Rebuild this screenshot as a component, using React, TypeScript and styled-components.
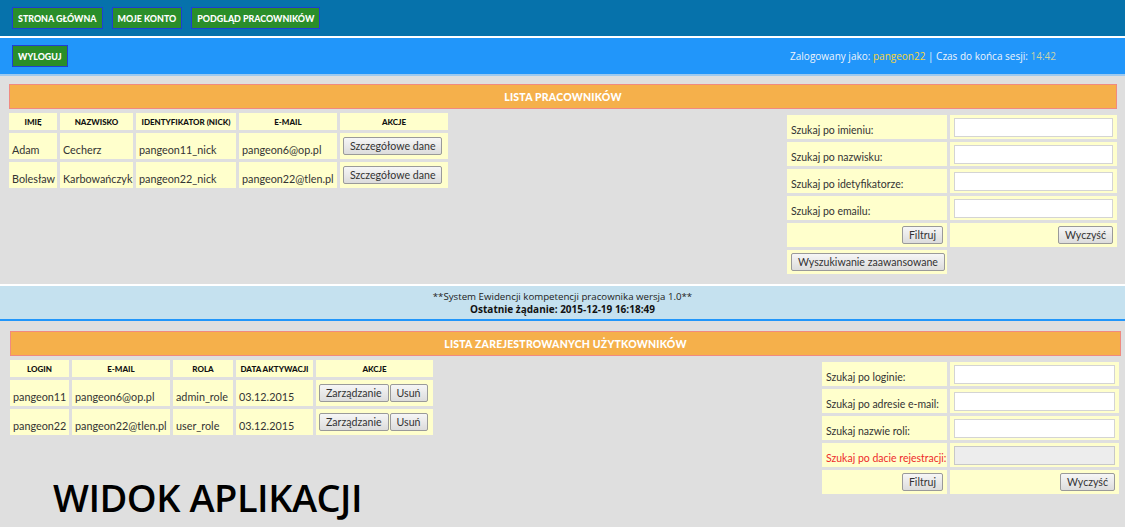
import React from "react";
import styled, { createGlobalStyle } from "styled-components";

const Global = createGlobalStyle`
  html, body { margin: 0; padding: 0; background: #dfdfdf; }
  body { font-family: "Lato", "Noto Sans", sans-serif; font-size: 11px; color: #333; }
  * { box-sizing: border-box; }
`;

const TopNav = styled.nav`
  height: 36px;
  background: #0672ab;
  display: flex;
  align-items: center;
  gap: 9px;
  padding: 0 12px;
  border-bottom: 2px solid #ffffff;
  box-sizing: content-box;
`;

const NavButton = styled.button`
  height: 22px;
  padding: 0 5px;
  background: #2a8e2a;
  border: 1px solid #1f3fd6;
  color: #fff;
  font-family: "Lato", sans-serif;
  font-weight: 900;
  font-size: 8.9px;
  letter-spacing: 0;
  text-transform: uppercase;
  cursor: pointer;
`;

const UserBar = styled.div`
  height: 36px;
  background: #2196fa;
  display: flex;
  align-items: center;
  justify-content: space-between;
  padding: 0 69px 0 12px;
  border-bottom: 2px solid #9ec9ee;
  box-sizing: content-box;
`;

const Session = styled.div`
  color: #eef4fb;
  font-family: "Open Sans", sans-serif;
  font-size: 10px;
  white-space: nowrap;
`;

const Hl = styled.span<{ $c: string }>`
  color: ${(p) => p.$c};
`;

const Section = styled.section<{ $l: number; $r: number; $t: number; $h: number }>`
  padding: ${(p) => p.$t}px ${(p) => p.$r}px 0 ${(p) => p.$l}px;
  height: ${(p) => p.$h}px;
  display: flex;
  flex-direction: column;
`;

const TitleBar = styled.div`
  flex: 0 0 25px;
  height: 25px;
  background: #f5b04b;
  border: 1px solid #f08a80;
  display: flex;
  align-items: center;
  justify-content: center;
  color: #fff;
  font-family: "Lato", sans-serif;
  font-weight: 900;
  font-size: 10.5px;
  letter-spacing: 0.2px;
  text-transform: uppercase;
`;

const ContentRow = styled.div`
  display: flex;
  justify-content: space-between;
  align-items: flex-start;
`;

const LeftCol = styled.div`
  display: flex;
  flex-direction: column;
`;

const DataTable = styled.table<{ $w: number }>`
  width: ${(p) => p.$w}px;
  border-collapse: separate;
  border-spacing: 3px;
  table-layout: fixed;
  margin: 1px 0 0 -3px;
`;

const Th = styled.th`
  height: 17px;
  padding: 0;
  background: #ffffcc;
  color: #111;
  font-family: "Lato", sans-serif;
  font-weight: 900;
  font-size: 8px;
  text-transform: uppercase;
  text-align: center;
  white-space: nowrap;
  overflow: hidden;
`;

const Td = styled.td<{ $h: number }>`
  height: ${(p) => p.$h}px;
  padding: 6px 3px 0 3px;
  background: #ffffcc;
  color: #333;
  font-size: 10.8px;
  white-space: nowrap;
  vertical-align: middle;
  overflow: hidden;
`;

const ActionTd = styled.td`
  padding: 0 3px;
  background: #ffffcc;
  white-space: nowrap;
  vertical-align: middle;
`;

const GreyButton = styled.button`
  height: 18px;
  padding: 0 6px;
  background: linear-gradient(#f6f6f6, #dcdcdc);
  border: 1px solid #9a9a9a;
  border-radius: 2px;
  color: #333;
  font-family: "Lato", sans-serif;
  font-size: 10.6px;
  line-height: 16px;
  cursor: pointer;
  & + & { margin-left: 1px; }
`;

const FormTable = styled.table<{ $m: string; $w: number }>`
  width: ${(p) => p.$w}px;
  border-collapse: separate;
  border-spacing: 3px;
  table-layout: fixed;
  margin: ${(p) => p.$m};
`;

const LabelTd = styled.td<{ $h: number; $red?: boolean }>`
  height: ${(p) => p.$h}px;
  padding: 6px 2px 0 4px;
  background: #ffffcc;
  color: ${(p) => (p.$red ? "#ee2b2b" : "#333")};
  font-size: 10.5px;
  white-space: nowrap;
  overflow: hidden;
`;

const ButtonTd = styled.td<{ $align?: string }>`
  height: 24px;
  padding: 0 4px;
  background: #ffffcc;
  white-space: nowrap;
  text-align: ${(p) => p.$align || "left"};
  vertical-align: middle;
`;

const InputTd = styled.td`
  padding: 0 4px;
  background: #ffffcc;
  vertical-align: middle;
`;

const TextInput = styled.input`
  display: block;
  width: 100%;
  height: 19px;
  border: 1px solid #d4d4d4;
  background: #fff;
  padding: 0 3px;
  font-size: 11px;
  &:disabled { background: #ededed; border-color: #c8c8c8; }
`;

const Footer = styled.footer`
  height: 37px;
  background: #c5e1ef;
  border-top: 2px solid #ffffff;
  border-bottom: 2px solid #2196fa;
  display: flex;
  flex-direction: column;
  align-items: center;
  justify-content: center;
  font-family: "Open Sans", sans-serif;
  color: #222;
`;

const FooterLine = styled.div`
  font-size: 9.7px;
  line-height: 12px;
`;

const Bold = styled.div`
  font-size: 10px;
  line-height: 12px;
  font-weight: 700;
  color: #111;
`;

const BigTitle = styled.h1`
  margin: 40px 0 0 43px;
  font-family: "Open Sans", sans-serif;
  font-weight: 600;
  font-size: 38px;
  letter-spacing: -0.5px;
  color: #000;
  line-height: 1;
`;

const employees = [
  ["Adam", "Cecherz", "pangeon11_nick", "pangeon6@op.pl"],
  ["Bolesław", "Karbowańczyk", "pangeon22_nick", "pangeon22@tlen.pl"],
];

const users = [
  ["pangeon11", "pangeon6@op.pl", "admin_role", "03.12.2015"],
  ["pangeon22", "pangeon22@tlen.pl", "user_role", "03.12.2015"],
];

const Cols = ({ widths }: { widths: number[] }) => (
  <colgroup>
    {widths.map((w, i) => (
      <col key={i} style={{ width: w }} />
    ))}
  </colgroup>
);

export default function App() {
  return (
    <>
      <Global />
      <TopNav>
        <NavButton>Strona główna</NavButton>
        <NavButton>Moje konto</NavButton>
        <NavButton>Podgląd pracowników</NavButton>
      </TopNav>
      <UserBar>
        <NavButton>Wyloguj</NavButton>
        <Session>
          Zalogowany jako: <Hl $c="#f5d53a">pangeon22</Hl> | Czas do końca sesji:{" "}
          <Hl $c="#c9d3a8">14:42</Hl>
        </Session>
      </UserBar>

      <Section $l={9} $r={8} $t={8} $h={208}>
        <TitleBar>Lista pracowników</TitleBar>
        <ContentRow>
          <DataTable $w={445}>
            <Cols widths={[48, 73, 100, 98, 108]} />
            <thead>
              <tr>
                <Th>Imię</Th>
                <Th>Nazwisko</Th>
                <Th>Identyfikator (nick)</Th>
                <Th>E-mail</Th>
                <Th>Akcje</Th>
              </tr>
            </thead>
            <tbody>
              {employees.map((e) => (
                <tr key={e[0]}>
                  {e.map((c) => (
                    <Td key={c} $h={26}>{c}</Td>
                  ))}
                  <ActionTd>
                    <GreyButton>Szczegółowe dane</GreyButton>
                  </ActionTd>
                </tr>
              ))}
            </tbody>
          </DataTable>
          <FormTable $m="3px -3px 0 0" $w={336}>
            <Cols widths={[160, 167]} />
            <tbody>
              {["Szukaj po imieniu:", "Szukaj po nazwisku:", "Szukaj po idetyfikatorze:", "Szukaj po emailu:"].map((l) => (
                <tr key={l}>
                  <LabelTd $h={24}>{l}</LabelTd>
                  <InputTd><TextInput /></InputTd>
                </tr>
              ))}
              <tr>
                <ButtonTd $align="right"><GreyButton>Filtruj</GreyButton></ButtonTd>
                <ButtonTd $align="right"><GreyButton>Wyczyść</GreyButton></ButtonTd>
              </tr>
              <tr>
                <ButtonTd><GreyButton>Wyszukiwanie zaawansowane</GreyButton></ButtonTd>
              </tr>
            </tbody>
          </FormTable>
        </ContentRow>
      </Section>

      <Footer>
        <FooterLine>**System Ewidencji kompetencji pracownika wersja 1.0**</FooterLine>
        <Bold>Ostatnie żądanie: 2015-12-19 16:18:49</Bold>
      </Footer>

      <Section $l={10} $r={4} $t={10} $h={206}>
        <TitleBar>Lista zarejestrowanych użytkowników</TitleBar>
        <ContentRow>
          <LeftCol>
            <DataTable $w={429}>
              <Cols widths={[59, 98, 60, 77, 117]} />
              <thead>
                <tr>
                  <Th>Login</Th>
                  <Th>E-mail</Th>
                  <Th>Rola</Th>
                  <Th>Data aktywacji</Th>
                  <Th>Akcje</Th>
                </tr>
              </thead>
              <tbody>
                {users.map((u) => (
                  <tr key={u[0]}>
                    {u.map((c) => (
                      <Td key={c} $h={26}>{c}</Td>
                    ))}
                    <ActionTd>
                      <GreyButton>Zarządzanie</GreyButton>
                      <GreyButton>Usuń</GreyButton>
                    </ActionTd>
                  </tr>
                ))}
              </tbody>
            </DataTable>
            <BigTitle>WIDOK APLIKACJI</BigTitle>
          </LeftCol>
          <FormTable $m="3px -1px 0 0" $w={303}>
            <Cols widths={[125, 169]} />
            <tbody>
              {["Szukaj po loginie:", "Szukaj po adresie e-mail:", "Szukaj nazwie roli:"].map((l) => (
                <tr key={l}>
                  <LabelTd $h={24}>{l}</LabelTd>
                  <InputTd><TextInput /></InputTd>
                </tr>
              ))}
              <tr>
                <LabelTd $h={24} $red>Szukaj po dacie rejestracji:</LabelTd>
                <InputTd><TextInput disabled /></InputTd>
              </tr>
              <tr>
                <ButtonTd $align="right"><GreyButton>Filtruj</GreyButton></ButtonTd>
                <ButtonTd $align="right"><GreyButton>Wyczyść</GreyButton></ButtonTd>
              </tr>
            </tbody>
          </FormTable>
        </ContentRow>
      </Section>
    </>
  );
}
